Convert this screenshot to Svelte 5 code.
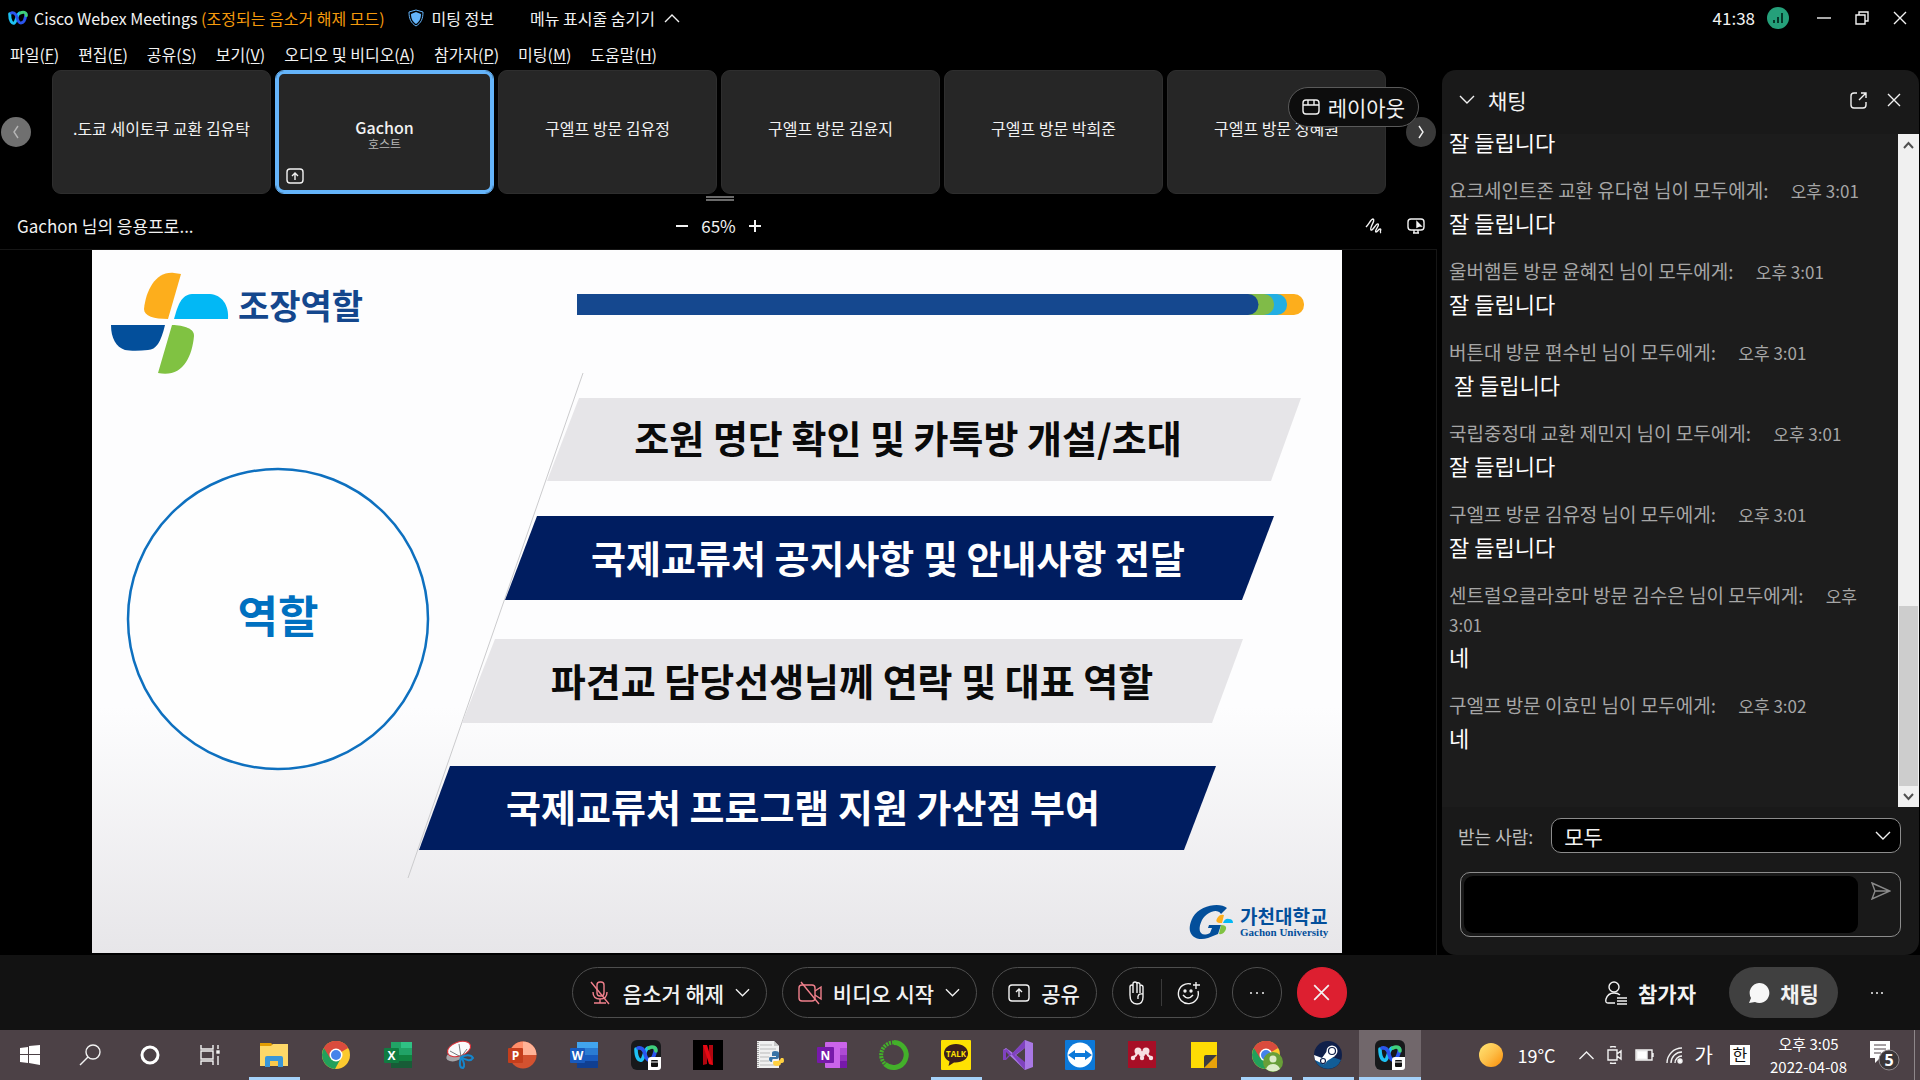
<script>
  const menus = [
    ['파일', 'F'],
    ['편집', 'E'],
    ['공유', 'S'],
    ['보기', 'V'],
    ['오디오 및 비디오', 'A'],
    ['참가자', 'P'],
    ['미팅', 'M'],
    ['도움말', 'H']
  ];

  const people = [
    { name: '.도쿄 세이토쿠 교환 김유탁' },
    { name: 'Gachon', role: '호스트', active: true },
    { name: '구엘프 방문 김유정' },
    { name: '구엘프 방문 김윤지' },
    { name: '구엘프 방문 박희준' },
    { name: '구엘프 방문 정혜원' }
  ];

  const messages = [
    { from: '', time: '', body: '잘 들립니다' },
    { from: '요크세인트존 교환 유다현', time: '오후 3:01', body: '잘 들립니다' },
    { from: '울버햄튼 방문 윤혜진', time: '오후 3:01', body: '잘 들립니다' },
    { from: '버튼대 방문 편수빈', time: '오후 3:01', body: '\u00a0잘 들립니다' },
    { from: '국립중정대 교환 제민지', time: '오후 3:01', body: '잘 들립니다' },
    { from: '구엘프 방문 김유정', time: '오후 3:01', body: '잘 들립니다' },
    { from: '센트럴오클라호마 방문 김수은', time: '오후 3:01', body: '네' },
    { from: '구엘프 방문 이효민', time: '오후 3:02', body: '네' }
  ];

  const bands = [
    { points: '487,148 1209,148 1179,231 455,231', fill: '#e6e5e8', ink: '#0a0a0a', x: 816, y: 203, text: '조원 명단 확인 및 카톡방 개설/초대' },
    { points: '445,266 1182,266 1150,350 413,350', fill: '#001d60', ink: '#ffffff', x: 796, y: 323, text: '국제교류처 공지사항 및 안내사항 전달' },
    { points: '403,389 1151,389 1120,473 370,473', fill: '#e6e5e8', ink: '#0a0a0a', x: 760, y: 446, text: '파견교 담당선생님께 연락 및 대표 역할' },
    { points: '358,516 1124,516 1092,600 327,600', fill: '#001d60', ink: '#ffffff', x: 711, y: 572, text: '국제교류처 프로그램 지원 가산점 부여' }
  ];

  const apps = [
    { id: 'explorer', label: '파일 탐색기', open: true },
    { id: 'chrome', label: 'Chrome' },
    { id: 'excel', label: 'Excel' },
    { id: 'snip', label: '캡처 도구' },
    { id: 'ppt', label: 'PowerPoint' },
    { id: 'word', label: 'Word' },
    { id: 'webex', label: 'Webex' },
    { id: 'netflix', label: 'Netflix' },
    { id: 'idle', label: 'IDLE' },
    { id: 'onenote', label: 'OneNote' },
    { id: 'anaconda', label: 'Anaconda' },
    { id: 'talk', label: 'KakaoTalk', open: true },
    { id: 'vs', label: 'Visual Studio' },
    { id: 'teamviewer', label: 'TeamViewer' },
    { id: 'mendeley', label: 'Mendeley' },
    { id: 'sticky', label: '스티커 메모' },
    { id: 'chromeuser', label: 'Chrome 프로필', open: true },
    { id: 'steam', label: 'Steam', open: true },
    { id: 'webex', label: 'Webex Meetings', open: true, active: true }
  ];

  let recipient = $state('모두');
  let draft = $state('');
</script>

{#snippet officeIcon(letter, tile, c1, c2, c3, c4)}
  <rect x="8" y="2" width="21" height="7" fill={c1} />
  <rect x="8" y="8" width="21" height="7" fill={c2} />
  <rect x="8" y="15" width="21" height="7" fill={c3} />
  <rect x="8" y="21" width="21" height="7" fill={c4} />
  <rect x="1" y="8" width="15" height="15" rx="1" fill={tile} />
  <text x="8.500" y="20" class="glyph">{letter}</text>
{/snippet}

{#snippet chromeIcon()}
  <circle cx="15" cy="15" r="14" fill="#fbc92f" />
  <path d="M15 15 L2.900 8 A14 14 0 0 1 27.100 8 Z" fill="#d94b3d" />
  <path d="M15 15 L2.900 8 A14 14 0 0 0 14 29 L20 18 Z" fill="#22a05b" />
  <path d="M15 8 H27.100 A14 14 0 0 0 15 1 A14 14 0 0 0 2.900 8 L9 18 Z" fill="#d94b3d" />
  <circle cx="15" cy="15" r="6.500" fill="#fff" />
  <circle cx="15" cy="15" r="5" fill="#4583ea" />
{/snippet}

{#snippet webexMark()}
  <path d="M5 9 C5 18 8 21 10.500 20 C13 19 13.500 9 17 8 " fill="none" stroke="#1ec2f3" stroke-width="3.600" stroke-linecap="round" />
  <path d="M7 8 C11 7 13 10 14 14 C15 18 16 20 18.500 20 C22 20 24 14 24.500 9" fill="none" stroke="#2a55ee" stroke-width="3.600" stroke-linecap="round" />
  <path d="M18 8 C21 6 25 7 25 11" fill="none" stroke="#3fd07c" stroke-width="3.600" stroke-linecap="round" />
{/snippet}

{#snippet appIcon(id)}
  <svg class="app-icon" viewBox="0 0 30 30" aria-hidden="true">
    {#if id === 'explorer'}
      <path d="M1 3 H12 L14 5 V10 H1 Z" fill="#e19c02" />
      <path d="M1 6 H12 L14 4 H29 V26 H1 Z" fill="#fdd868" />
      <path d="M6 27 V18 Q6 16 8 16 H22 Q24 16 24 18 V27 H19 V21 H11 V27 Z" fill="#3a97d8" />
      <path d="M11 26 V21 H19 V26 Z" fill="#fbc94b" />
    {:else if id === 'chrome'}
      {@render chromeIcon()}
    {:else if id === 'excel'}
      {@render officeIcon('X', '#107c41', '#2fc184', '#21a366', '#10823f', '#185c37')}
      <rect x="8" y="2" width="10" height="6" fill="#21a366" />
    {:else if id === 'snip'}
      <ellipse cx="10" cy="16" rx="9" ry="5" fill="#a7a5a8" transform="rotate(-15 10 16)" />
      <ellipse cx="14" cy="9" rx="12" ry="7" fill="#fafafa" stroke="#dc3138" transform="rotate(-20 14 9)" />
      <path d="M14 4 L16 17 L5 11 M16 17 L22 9" fill="none" stroke="#77797c" />
      <path d="M16 17 Q25 13 28 18 Q25 23 16 17 Q21 25 18 28 Q13 28 16 17" fill="none" stroke="#1586cb" stroke-width="2" />
    {:else if id === 'ppt'}
      <circle cx="16" cy="15" r="13.500" fill="#d35230" />
      <path d="M16 1.500 A13.500 13.500 0 0 1 29.500 15 H16 Z" fill="#ffb397" />
      <path d="M16 1.500 A13.500 13.500 0 0 0 2.500 15 H16 Z" fill="#ff8f6b" />
      <rect x="1" y="8" width="15" height="15" rx="1" fill="#c43e1c" />
      <text x="8.500" y="20" class="glyph">P</text>
    {:else if id === 'word'}
      {@render officeIcon('W', '#185abd', '#41a5ee', '#2b7cd3', '#185abd', '#103f91')}
    {:else if id === 'webex'}
      <rect width="30" height="30" rx="6" fill="#17191b" />
      {@render webexMark()}
      <path d="M17 30 V20 Q17 17 20 17 H30 V27 Q30 30 27 30 Z" fill="#fff" />
      <rect x="20" y="20" width="7" height="7" rx="1" fill="#111" />
      <path d="M20 22 H27" stroke="#fff" />
    {:else if id === 'netflix'}
      <rect width="30" height="30" fill="#000" />
      <path d="M10 5 H14 V24 L10 25 Z M16 5 H20 V25 L16 24 Z" fill="#b1060f" />
      <path d="M10 5 H14 L20 25 L16 24 Z" fill="#e50914" />
    {:else if id === 'idle'}
      <path d="M2 1 H19 L24 6 V28 H2 Z" fill="#f0f0f0" />
      <path d="M19 1 V6 H24" fill="#c8c8c8" />
      <path d="M5 5 H17 M5 9 H21 M5 13 H15 M5 17 H14 M5 21 H14 M5 25 H21" stroke="#b9b9b9" />
      <path d="M3 2 V28" stroke="#555" stroke-dasharray="1 1" />
      <path d="M15 17 H21 V16 H17 V13 Q17 11 20 11 Q24 11 24 13 V17 Q24 19 22 19 H18 Q17 19 17 22 Q14 22 14 19 Q14 17 15 17" fill="#3873a6" />
      <path d="M28 18 H26 Q25 21 22 21 H19 Q18 21 18 23 Q18 26 22 26 Q26 26 26 23 H22 Q29 24 29 21 Q29 18 28 18" fill="#ffd040" />
    {:else if id === 'onenote'}
      <rect x="8" y="2" width="22" height="26" rx="1" fill="#ca64ea" />
      <rect x="23" y="8" width="7" height="7" fill="#ae4bd5" />
      <rect x="23" y="15" width="7" height="7" fill="#9332bf" />
      <rect x="23" y="21" width="7" height="7" fill="#7719aa" />
      <rect x="0" y="7" width="17" height="16" rx="1" fill="#7719aa" />
      <text x="8.500" y="20" class="glyph">N</text>
    {:else if id === 'anaconda'}
      <path d="M15 2.500 A12.500 12.500 0 1 1 6 24" fill="none" stroke="#43b02a" stroke-width="5" />
      <path d="M15 2.500 A12.500 12.500 0 0 0 6 24" fill="none" stroke="#43b02a" stroke-width="4" stroke-dasharray="2 1" />
    {:else if id === 'talk'}
      <rect width="30" height="30" rx="1" fill="#fee102" />
      <path d="M15 4 C8 4 3 8 3 13.500 C3 17 5.500 20 8.500 21.500 L7.500 26 L13 22.500 C21 23 27 19 27 13.500 C27 8 22 4 15 4 Z" fill="#3b1e1e" />
      <text x="15" y="17" class="glyph talk">TALK</text>
    {:else if id === 'vs'}
      <path d="M22 0 L30 3 V27 L22 30 L3 12 L0 10 L3 8 L10 13 Z" fill="#a978e4" />
      <path d="M0 10 L4 9 L22 30 L22 21 L12 15 L22 8 V0 L3 20 L0 20 Z" fill="#7f42bf" />
      <path d="M22 8 V22 L13 15 Z" fill="#4c4146" />
      <path d="M3 12 V18 L6 15 Z" fill="#4c4146" />
    {:else if id === 'teamviewer'}
      <rect width="30" height="30" rx="1" fill="#0c79d9" />
      <circle cx="15" cy="15" r="12.500" fill="#fff" />
      <path d="M3 15 L10 10 V13 H20 V10 L27 15 L20 20 V17 H10 V20 Z" fill="#0c79d9" />
    {:else if id === 'mendeley'}
      <rect x="1" y="1" width="28" height="27" fill="#a70e26" />
      <g fill="#f7dfe2">
        <circle cx="11" cy="11" r="3.500" /><circle cx="19" cy="11" r="3.500" /><circle cx="15" cy="14" r="3" />
        <circle cx="6" cy="18" r="2.200" /><circle cx="15" cy="18" r="2.200" /><circle cx="24" cy="18" r="2.200" />
      </g>
      <path d="M10 12 Q10 16 6 17 M20 12 Q20 16 24 17" fill="none" stroke="#f7dfe2" stroke-width="2" />
    {:else if id === 'sticky'}
      <path d="M2 2 H28 V28 H2 Z" fill="#fedc04" />
      <path d="M28 15 V28 H15 Z" fill="#e9a20a" />
      <path d="M15 28 V17 Q15 15 17 15 H28 Z" fill="#3c3c40" />
    {:else if id === 'chromeuser'}
      {@render chromeIcon()}
      <circle cx="22" cy="22" r="10" fill="#689f38" />
      <circle cx="22" cy="19" r="3.500" fill="#dcedc8" />
      <path d="M15 29 Q17 24 22 24 Q27 24 29 29 Q22 34 15 29" fill="#dcedc8" />
    {:else if id === 'steam'}
      <circle cx="15" cy="15" r="14" fill="#10204a" />
      <path d="M2 20 Q15 14 28 20 A14 14 0 0 1 2 20" fill="#125d96" />
      <path d="M1 15 L9 18 L14 11 L22 16 L14 21 Q12 26 8 23 L2 20 Z" fill="#fff" />
      <circle cx="19" cy="11" r="5.500" fill="#fff" />
      <circle cx="19" cy="11" r="3.500" fill="none" stroke="#10204a" stroke-width="1.200" />
      <circle cx="10" cy="21" r="2.500" fill="none" stroke="#10204a" stroke-width="1.200" />
    {/if}
  </svg>
{/snippet}

{#snippet cross(size)}
  <svg width={size} height={size} viewBox="0 0 14 14" class="line"><path d="M1 1 L13 13 M13 1 L1 13" /></svg>
{/snippet}

{#snippet chevron(dir, w)}
  <svg width={w} height="10" viewBox="0 0 16 10" class="line">
    <path d={dir === 'up' ? 'M1 9 L8 2 L15 9' : 'M1 1 L8 8 L15 1'} />
  </svg>
{/snippet}

<div class="screen">
  <header class="titlebar">
    <svg class="brand" width="20" height="18" viewBox="3 5 24 18">{@render webexMark()}</svg>
    <h1>Cisco Webex Meetings <span class="mode">(조정되는 음소거 해제 모드)</span></h1>
    <button class="plain info">
      <svg width="16" height="18" viewBox="0 0 16 18"><path d="M8 1 L15 3 C15 10 13 14 8 17 C3 14 1 10 1 3 Z" fill="none" stroke="#64b4fa" /><path d="M8 3 L13 5 C13 10 11 13 8 15 C5 13 3 10 3 5 Z" fill="#64b4fa" /></svg>
      미팅 정보
    </button>
    <button class="plain hide">메뉴 표시줄 숨기기 {@render chevron('up', 18)}</button>
    <div class="window-tools">
      <span class="timer">41:38</span>
      <svg class="signal" width="22" height="22" viewBox="0 0 22 22"><circle cx="11" cy="11" r="11" fill="#25a07a" /><path d="M7 13 V16 M11 10 V16 M15 6 V16" stroke="#06382a" stroke-width="2" /></svg>
      <button class="plain" aria-label="최소화"><svg width="14" height="14" viewBox="0 0 14 14" class="line"><path d="M0 7 H14" /></svg></button>
      <button class="plain" aria-label="이전 크기로"><svg width="14" height="14" viewBox="0 0 14 14" class="line"><path d="M1 4 H10 V13 H1 Z M4 4 V1 H13 V10 H10" /></svg></button>
      <button class="plain" aria-label="닫기">{@render cross(14)}</button>
    </div>
  </header>

  <nav class="menubar">
    {#each menus as [label, key]}
      <button class="plain">{label}(<u>{key}</u>)</button>
    {/each}
  </nav>

  <div class="middle">
    <main>
      <section class="filmstrip">
        <button class="round prev" aria-label="이전"><svg width="8" height="14" viewBox="0 0 8 14" class="line"><path d="M6 1 L2 7 L6 13" /></svg></button>
        <ul class="tiles">
          {#each people as p}
            <li class:active={p.active}>
              <span class="name">{p.name}</span>
              {#if p.role}
                <span class="role">{p.role}</span>
                <svg class="sharing line" width="18" height="16" viewBox="0 0 18 16"><rect x="1" y="1" width="16" height="14" rx="3" /><path d="M9 12 V5 M6 8 L9 5 L12 8" /></svg>
              {/if}
            </li>
          {/each}
        </ul>
        <button class="round next" aria-label="다음"><svg width="8" height="14" viewBox="0 0 8 14" class="line"><path d="M2 1 L6 7 L2 13" /></svg></button>
        <button class="layout">
          <svg width="18" height="16" viewBox="0 0 18 16" class="line"><rect x="1" y="1" width="16" height="14" rx="3" /><path d="M1 6 H17 M6 1 V6 M12 1 V6" /></svg>
          레이아웃
        </button>
      </section>
      <div class="handle"></div>

      <div class="sharebar">
        <span>Gachon 님의 응용프로...</span>
        <div class="zoom">
          <button class="plain" aria-label="축소"><svg width="12" height="12" viewBox="0 0 12 12" class="line thick"><path d="M0 6 H12" /></svg></button>
          <span>65%</span>
          <button class="plain" aria-label="확대"><svg width="12" height="12" viewBox="0 0 12 12" class="line thick"><path d="M0 6 H12 M6 0 V12" /></svg></button>
        </div>
        <div class="tools">
          <button class="plain" aria-label="주석 달기"><svg width="18" height="16" viewBox="0 0 18 16" class="line"><path d="M1 9 C4 6 6 1 8 1 C11 2 4 10 6 12 C8 13 11 5 13 6 C15 7 9 13 11 14 C13 14 13 11 15 11 C17 11 14 14 16 15" /></svg></button>
          <button class="plain" aria-label="원격 제어"><svg width="18" height="16" viewBox="0 0 18 16" class="line"><rect x="1" y="1" width="16" height="11" rx="3" /><path d="M6 15 H12 M7 12 V15 M11 12 V15" /><path d="M10 4 L14 8 H12 L10 9 Z" fill="#f2f2f2" /></svg></button>
        </div>
      </div>

      <div class="stage">
        <svg class="slide" viewBox="0 0 1250 703" role="img" aria-label="조장역할">
          <defs>
            <linearGradient id="paper" x1="0" y1="0" x2="0" y2="1">
              <stop offset="0.650" stop-color="#fdfdfe" /><stop offset="1" stop-color="#e7e6e9" />
            </linearGradient>
          </defs>
          <rect width="1250" height="703" fill="url(#paper)" />
          <path d="M89 24 L76 69 C62 69 52 66 52 59 C54 40 64 21 82 23 Z" fill="#fdae1c" />
          <path d="M82 69 C86 55 89 45 100 44 H118 C130 45 137 55 136 69 Z" fill="#02b8f5" />
          <path d="M19 75 H73 C69 92 64 100 56 100 C48 101 38 101 33 100 C24 97 19 88 19 75 Z" fill="#034f9b" />
          <path d="M80 75 C92 75 103 79 102 86 C100 108 90 128 66 123 Z" fill="#80c242" />
          <text x="146" y="69" class="deck" font-size="34" fill="#14478d">조장역할</text>

          <rect x="1170" y="44" width="42" height="21" rx="10" fill="#fdae1c" />
          <rect x="1150" y="44" width="45" height="21" rx="10" fill="#22aee3" />
          <rect x="1140" y="44" width="42" height="21" rx="10" fill="#80bb48" />
          <path d="M485 44 H1156 A10 10 0 0 1 1156 65 H485 Z" fill="#15488f" />

          <circle cx="186" cy="369" r="150" fill="#fefefe" stroke="#0e70bf" stroke-width="2.500" />
          <text x="186" y="383" class="deck" font-size="44" text-anchor="middle" fill="#0070c0">역할</text>

          <path d="M491 123 L316 628" stroke="#cbcbcd" fill="none" />
          {#each bands as b}
            <polygon points={b.points} fill={b.fill} />
            <text x={b.x} y={b.y} class="deck" font-size="38" text-anchor="middle" fill={b.ink}>{b.text}</text>
          {/each}

          <path d="M1135 658 C1128 652 1108 655 1101 667 C1092 684 1103 692 1116 688 L1126 684 L1129 675 H1117 L1116 678 H1120 L1118 683 C1108 688 1105 680 1110 670 C1115 662 1125 658 1129 664 Z" fill="#034f9b" />
          <path d="M1132 665 L1130 673 C1124 673 1123 671 1126 667 Q1128 664 1132 665" fill="#fdae1c" />
          <path d="M1131 673 Q1133 668 1137 669 Q1141 669 1141 673 Z" fill="#02b8f5" />
          <path d="M1129 675 Q1135 675 1134 679 Q1132 685 1127 684 Z" fill="#80c242" />
          <text x="1148" y="674" class="deck" font-size="19" fill="#034f9b">가천대학교</text>
          <text x="1148" y="686" class="univ" font-size="11" fill="#034f9b">Gachon University</text>
        </svg>
      </div>
    </main>

    <aside class="chat">
      <div class="chat-head">
        <button class="plain" aria-label="접기">{@render chevron('down', 18)}</button>
        <h2>채팅</h2>
        <button class="plain" aria-label="새 창"><svg width="17" height="17" viewBox="0 0 17 17" class="line"><path d="M7 1 H4 Q1 1 1 4 V13 Q1 16 4 16 H13 Q16 16 16 13 V10 M9 8 L16 1 M11 1 H16 V6" /></svg></button>
        <button class="plain" aria-label="채팅 닫기">{@render cross(14)}</button>
      </div>
      <div class="chat-scroll">
        <div class="log">
          {#each messages as m}
            <article>
              {#if m.from}
                <p class="from">{m.from} 님이 모두에게: <time>{m.time}</time></p>
              {/if}
              <p class="body">{m.body}</p>
            </article>
          {/each}
        </div>
        <div class="scrollbar">
          <button class="plain" aria-label="위로"><svg width="11" height="8" viewBox="0 0 11 8"><path d="M1 7 L5.500 2 L10 7" /></svg></button>
          <div class="thumb"></div>
          <button class="plain" aria-label="아래로"><svg width="11" height="8" viewBox="0 0 11 8"><path d="M1 1 L5.500 6 L10 1" /></svg></button>
        </div>
      </div>
      <div class="recipient">
        <label for="to">받는 사람:</label>
        <div class="select">
          <select id="to" bind:value={recipient}><option>모두</option></select>
          {@render chevron('down', 16)}
        </div>
      </div>
      <div class="compose">
        <textarea aria-label="채팅 메시지" bind:value={draft}></textarea>
        <button class="plain" aria-label="보내기"><svg width="20" height="18" viewBox="0 0 20 18" class="line dim"><path d="M1 1 L19 9 L1 17 L4 9 Z M4 9 H19" /></svg></button>
      </div>
    </aside>
  </div>

  <footer class="controls">
    <div class="center">
      <button class="pill wide">
        <svg width="24" height="24" viewBox="0 0 24 24" class="line red"><rect x="9" y="1" width="7" height="14" rx="3" /><path d="M5 11 Q5 18 12 18 Q19 18 19 11 M12 18 V22 M6 22 H18 M3 1 L21 23" /></svg>
        음소거 해제
        {@render chevron('down', 15)}
      </button>
      <button class="pill wide">
        <svg width="24" height="24" viewBox="0 0 24 24" class="line red"><rect x="1" y="4" width="16" height="16" rx="3" /><path d="M17 10 L23 6 V18 L17 14 M3 1 L21 23" /></svg>
        비디오 시작
        {@render chevron('down', 15)}
      </button>
      <button class="pill share">
        <svg width="22" height="18" viewBox="0 0 22 18" class="line"><rect x="1" y="1" width="20" height="16" rx="3" /><path d="M11 13 V5 M8 8 L11 5 L14 8" /></svg>
        공유
      </button>
      <div class="pill pair">
        <button class="plain" aria-label="손 들기"><svg width="18" height="24" viewBox="0 0 18 24" class="line"><path d="M2 14 V6 Q2 4 4 4 Q5 4 5 6 V3 Q5 1 7 1 Q9 1 9 3 Q9 1 11 2 Q12 2 12 4 Q15 4 15 6 V16 Q15 23 9 23 Q2 23 2 14 M5 5 V12 M9 3 V12 M12 4 V12 M15 13 Q9 12 10 18" /></svg></button>
        <span class="rule"></span>
        <button class="plain" aria-label="반응"><svg width="24" height="24" viewBox="0 0 24 24" class="line"><path d="M14 3 A10 10 0 1 0 21 10 M6 14 Q11 20 16 14 M19 1 V8 M16 4 H23" /><circle cx="8" cy="10" r="1" fill="#f2f2f2" /><circle cx="14" cy="10" r="1" fill="#f2f2f2" /></svg></button>
      </div>
      <button class="pill circle" aria-label="더 보기"><svg width="16" height="4" viewBox="0 0 16 4" fill="#f2f2f2"><circle cx="2" cy="2" r="1" /><circle cx="8" cy="2" r="1" /><circle cx="14" cy="2" r="1" /></svg></button>
      <button class="pill circle leave" aria-label="미팅 나가기">{@render cross(17)}</button>
    </div>
    <div class="right">
      <button class="pill bare">
        <svg width="24" height="24" viewBox="0 0 24 24" class="line"><circle cx="10" cy="6" r="5" /><path d="M11 22 H4 Q1 22 2 18 Q4 12 10 12 Q14 12 16 14 M13 17 H23 M13 20 H23 M13 23 H23" /></svg>
        참가자
      </button>
      <button class="pill bare on">
        <svg width="22" height="22" viewBox="0 0 22 22"><path d="M11 1 A10 10 0 1 1 7 20 L1 21 L3 16 A10 10 0 0 1 11 1" fill="#f7f7f7" /></svg>
        채팅
      </button>
      <button class="plain" aria-label="더 많은 패널"><svg width="12" height="4" viewBox="0 0 12 4" fill="#f2f2f2"><circle cx="1" cy="2" r="1" /><circle cx="6" cy="2" r="1" /><circle cx="11" cy="2" r="1" /></svg></button>
    </div>
  </footer>

  <div class="taskbar">
    <button class="task sys" aria-label="시작"><svg width="20" height="20" viewBox="0 0 20 20" fill="#fff"><path d="M0 3 L8 2 V9 H0 Z M9 1 L20 0 V9 H9 Z M0 10 H8 V18 L0 17 Z M9 10 H20 V20 L9 18 Z" /></svg></button>
    <button class="task sys" aria-label="검색"><svg width="22" height="22" viewBox="0 0 22 22" class="line"><circle cx="14" cy="8" r="7" /><path d="M9 13 L1 21" /></svg></button>
    <button class="task sys" aria-label="Cortana"><svg width="20" height="20" viewBox="0 0 20 20"><circle cx="10" cy="10" r="8" fill="none" stroke="#fff" stroke-width="3" /></svg></button>
    <button class="task sys" aria-label="작업 보기"><svg width="20" height="20" viewBox="0 0 20 20" class="line"><path d="M1 0 V4 H13 V0 M1 20 V16 H13 V20 M1 6 H13 V14 H1 Z M18 0 V4 M18 11 V20" /><rect x="17" y="6" width="2" height="2" fill="#fff" /></svg></button>
    {#each apps as app}
      <button class="task" class:open={app.open} class:active={app.active} aria-label={app.label}>{@render appIcon(app.id)}</button>
    {/each}
    <div class="tray">
      <button class="plain weather">
        <svg width="24" height="24" viewBox="0 0 24 24"><defs><linearGradient id="sun" x1="0" y1="0" x2="1" y2="1"><stop offset="0" stop-color="#ffe676" /><stop offset="0.500" stop-color="#fdc04a" /><stop offset="1" stop-color="#fb8c05" /></linearGradient></defs><circle cx="12" cy="12" r="12" fill="url(#sun)" /></svg>
        19°C
      </button>
      <div class="status">
        {@render chevron('up', 17)}
        <svg width="16" height="18" viewBox="0 0 16 18" class="line"><path d="M1 4 H10 V14 H1 Z M10 8 L14 5 V13 L10 10 M3 1 Q6 0 9 1 M3 17 Q6 18 9 17" /></svg>
        <svg width="19" height="12" viewBox="0 0 19 12" class="line"><path d="M1 1 H17 V11 H1 Z M18 4 V8" /><rect x="2" y="2" width="10" height="8" fill="#fff" /></svg>
        <svg width="17" height="17" viewBox="0 0 17 17" class="line"><path d="M1 16 A15 15 0 0 1 16 1 M5 16 A11 11 0 0 1 16 5 M9 16 A7 7 0 0 1 16 9" /><circle cx="14" cy="14" r="2" fill="#fff" /></svg>
        <span class="ime">가</span>
      </div>
      <span class="hangul">한</span>
      <div class="clock"><span>오후 3:05</span><span>2022-04-08</span></div>
      <button class="plain notes" aria-label="알림">
        <svg width="32" height="32" viewBox="0 0 32 32"><path d="M1 2 H21 V19 H11 L6 24 V19 H1 Z" fill="#fff" /><path d="M5 6 H17 M5 10 H17 M5 14 H12" stroke="#4c4146" /><circle cx="20" cy="21" r="10" fill="#3b3739" stroke="#8e888b" /><text x="20" y="27" class="glyph count">5</text></svg>
      </button>
      <span class="peek"></span>
    </div>
  </div>
</div>

<style>
  :global(body) { background: #000; }
  * { box-sizing: border-box; margin: 0; padding: 0; }
  .screen {
    height: 100vh; min-height: 720px; display: flex; flex-direction: column; overflow: hidden;
    background: #000; color: #f2f2f2;
    font-family: "Noto Sans CJK KR", "Open Sans", sans-serif; font-size: 16px; line-height: 24px;
  }
  button, select, textarea { font: inherit; color: inherit; }
  button { cursor: pointer; white-space: nowrap; }
  .plain { background: none; border: 0; display: inline-flex; align-items: center; justify-content: center; }
  svg { display: block; flex: none; }
  .line { fill: none; stroke: #f2f2f2; stroke-width: 1.4; }
  .thick { stroke-width: 2; }
  .red { stroke: #f0808c; }
  .dim { stroke: #8a8a8a; }

  .titlebar { display: flex; align-items: center; height: 36px; padding: 0 13px 0 8px; flex: none; }
  h1 { font-size: 16px; font-weight: 400; margin-left: 6px; white-space: nowrap; }
  .mode { color: #f59a0c; }
  .info { gap: 8px; margin-left: 23px; }
  .hide { gap: 8px; margin-left: 36px; }
  .window-tools { display: flex; align-items: center; margin-left: auto; gap: 24px; }
  .timer { font-size: 17px; }
  .signal { margin: 0 4px 0 -12px; }

  .menubar { display: flex; gap: 19px; height: 34px; padding: 2px 10px 0; align-items: center; flex: none; }
  .menubar u { text-underline-offset: 2px; }
  .menubar .plain { display: block; }

  .middle { flex: 1; min-height: 0; display: flex; }
  main { flex: 1; min-width: 0; display: flex; flex-direction: column; }
  .filmstrip { position: relative; display: grid; grid-template-columns: 52px 1fr 56px; align-items: center; height: 124px; flex: none; }
  .round { width: 30px; height: 30px; border: 0; border-radius: 50%; background: #3a3a3a; display: grid; place-items: center; }
  .prev { background: #707070; margin-left: 1px; }
  .prev svg { stroke: #b5b5b5; }
  .next { justify-self: end; margin-right: 6px; }
  .tiles { list-style: none; display: flex; gap: 4px; height: 100%; }
  .tiles li {
    position: relative; flex: 1; min-width: 0; display: flex; flex-direction: column; align-items: center; justify-content: center;
    background: #262626; border: 1px solid #2e2e2e; border-radius: 9px; padding-bottom: 8px;
  }
  .tiles .active { border-color: #64b4fa; box-shadow: inset 0 0 0 3px #64b4fa; padding: 14px 0 8px; }
  .active .name { line-height: 18px; font-weight: 500; }
  .role { font-size: 12px; line-height: 16px; color: #b8b8b8; }
  .sharing { position: absolute; left: 10px; bottom: 9px; }
  .layout {
    position: absolute; right: 23px; top: 17px; height: 40px; padding: 0 13px; display: flex; align-items: center; gap: 8px;
    background: #0d0d0d; border: 1px solid #5a5a5a; border-radius: 20px; font-size: 21px;
  }
  .handle { width: 28px; height: 5px; margin: 2px 0 0 706px; border: solid #6a6a6a; border-width: 2px 0; flex: none; }

  .sharebar { display: grid; grid-template-columns: 1fr auto 1fr; align-items: center; height: 49px; padding: 2px 17px 0 17px; font-size: 17px; border-bottom: 1px solid #161616; margin-right: 5px; flex: none; }
  .zoom { display: flex; align-items: center; gap: 13px; }
  .tools { display: flex; gap: 24px; justify-self: end; margin-right: -5px; }
  .stage { flex: 1; min-height: 0; margin-right: 5px; border-right: 1px solid #161616; padding: 0 2px 2px 0; }
  .slide { width: 100%; height: 100%; }
  .deck { font-family: "Noto Sans CJK KR", sans-serif; font-weight: 700; }
  .univ { font-family: "Liberation Serif", serif; font-weight: 700; }

  .chat { flex: 0 0 477px; margin-right: 1px; display: flex; flex-direction: column; background: #191919; border-radius: 14px; }
  .chat-head { display: flex; align-items: center; height: 64px; padding: 0 18px 4px 16px; gap: 12px; flex: none; }
  h2 { font-size: 21px; font-weight: 400; flex: 1; }
  .chat-head .plain + .plain { margin-left: 8px; }
  .chat-scroll { flex: 1; min-height: 0; display: flex; background: #1c1c1c; }
  .log { flex: 1; min-width: 0; display: flex; flex-direction: column; justify-content: flex-end; gap: 16px; padding: 0 12px 52px 7px; overflow: hidden; }
  .from { font-size: 19px; line-height: 29px; color: #a6a6a6; }
  .from time { font-size: 17px; line-height: 20px; padding-left: 18px; }
  .body { font-size: 22px; line-height: 36px; color: #fff; }
  .scrollbar { width: 21px; background: #f0f0f0; display: flex; flex-direction: column; flex: none; }
  .scrollbar .plain { height: 21px; }
  .scrollbar path { fill: none; stroke: #505050; stroke-width: 2; }
  .thumb { height: 180px; margin: auto 1px 0; background: #cdcdcd; }
  .recipient { display: flex; align-items: center; gap: 18px; padding: 11px 18px 0 16px; font-size: 18px; flex: none; }
  .recipient label { color: #bcbcbc; }
  .select { flex: 1; display: grid; align-items: center; }
  .select select, .select :global(svg) { grid-area: 1 / 1; }
  .select :global(svg) { justify-self: end; margin-right: 10px; pointer-events: none; }
  select { appearance: none; height: 35px; padding: 0 12px; background: #000; border: 1px solid #8c8c8c; border-radius: 10px; font-size: 21px; line-height: 30px; }
  .compose { display: flex; align-items: flex-start; margin: 19px 18px 18px; height: 65px; padding: 3px; border: 1px solid #8c8c8c; border-radius: 10px; flex: none; }
  textarea { flex: 1; height: 57px; resize: none; border: 0; border-radius: 9px; background: #000; outline: 0; }
  .compose .plain { margin: 6px 6px 0 13px; }

  .controls { display: grid; grid-template-columns: 1fr auto 1fr; align-items: center; height: 75px; background: #121212; flex: none; }
  .center { grid-column: 2; display: flex; gap: 15px; margin-right: 2px; }
  .pill {
    display: flex; align-items: center; justify-content: center; height: 51px; border: 1px solid #4e4e4e; border-radius: 26px;
    background: none; font-size: 21px; font-weight: 500;
  }
  .wide { width: 195px; gap: 11px; }
  .share { width: 105px; gap: 11px; }
  .pair { width: 105px; gap: 15px; }
  .rule { width: 1px; height: 27px; background: #3a3a3a; }
  .circle { width: 50px; }
  .leave { background: #dd1f30; border-color: #dd1f30; }
  .right { display: flex; justify-self: end; align-items: center; padding-right: 37px; }
  .bare { border: 0; gap: 10px; padding: 0 19px; font-weight: 700; margin-right: 14px; }
  .on { background: #404040; width: 109px; margin-right: 33px; }

  .taskbar { display: flex; height: 50px; background: #4c4146; flex: none; }
  .task { width: 62px; border: 0; background: none; display: grid; place-items: center; position: relative; }
  .sys { width: 60px; }
  .sys:nth-child(4) { margin-right: 3px; }
  .app-icon { width: 30px; height: 30px; overflow: visible; }
  .open::after { content: ""; position: absolute; left: 6px; right: 5px; bottom: 0; height: 3px; background: #a5d2fa; }
  .task.active { background: #71676b; }
  .active.open::after { left: 0; right: 0; }
  .glyph { font-family: "Open Sans", sans-serif; font-weight: 700; font-size: 12px; fill: #fff; text-anchor: middle; }
  .talk { font-size: 8px; fill: #fee102; }
  .count { font-size: 16px; }
  .tray { display: flex; align-items: center; margin-left: auto; color: #fff; }
  .weather { gap: 14px; font-size: 18px; }
  .status { display: flex; align-items: center; gap: 12px; margin-left: 22px; }
  .ime { font-size: 20px; }
  .hangul { width: 20px; height: 20px; margin-left: 17px; background: #fff; color: #111; font-size: 16px; line-height: 19px; text-align: center; }
  .clock { display: flex; flex-direction: column; align-items: center; margin-left: 20px; font-size: 15px; line-height: 23px; }
  .notes { margin-left: 22px; }
  .peek { width: 6px; height: 50px; margin-left: 13px; border-left: 1px solid #8e878a; }
</style>
